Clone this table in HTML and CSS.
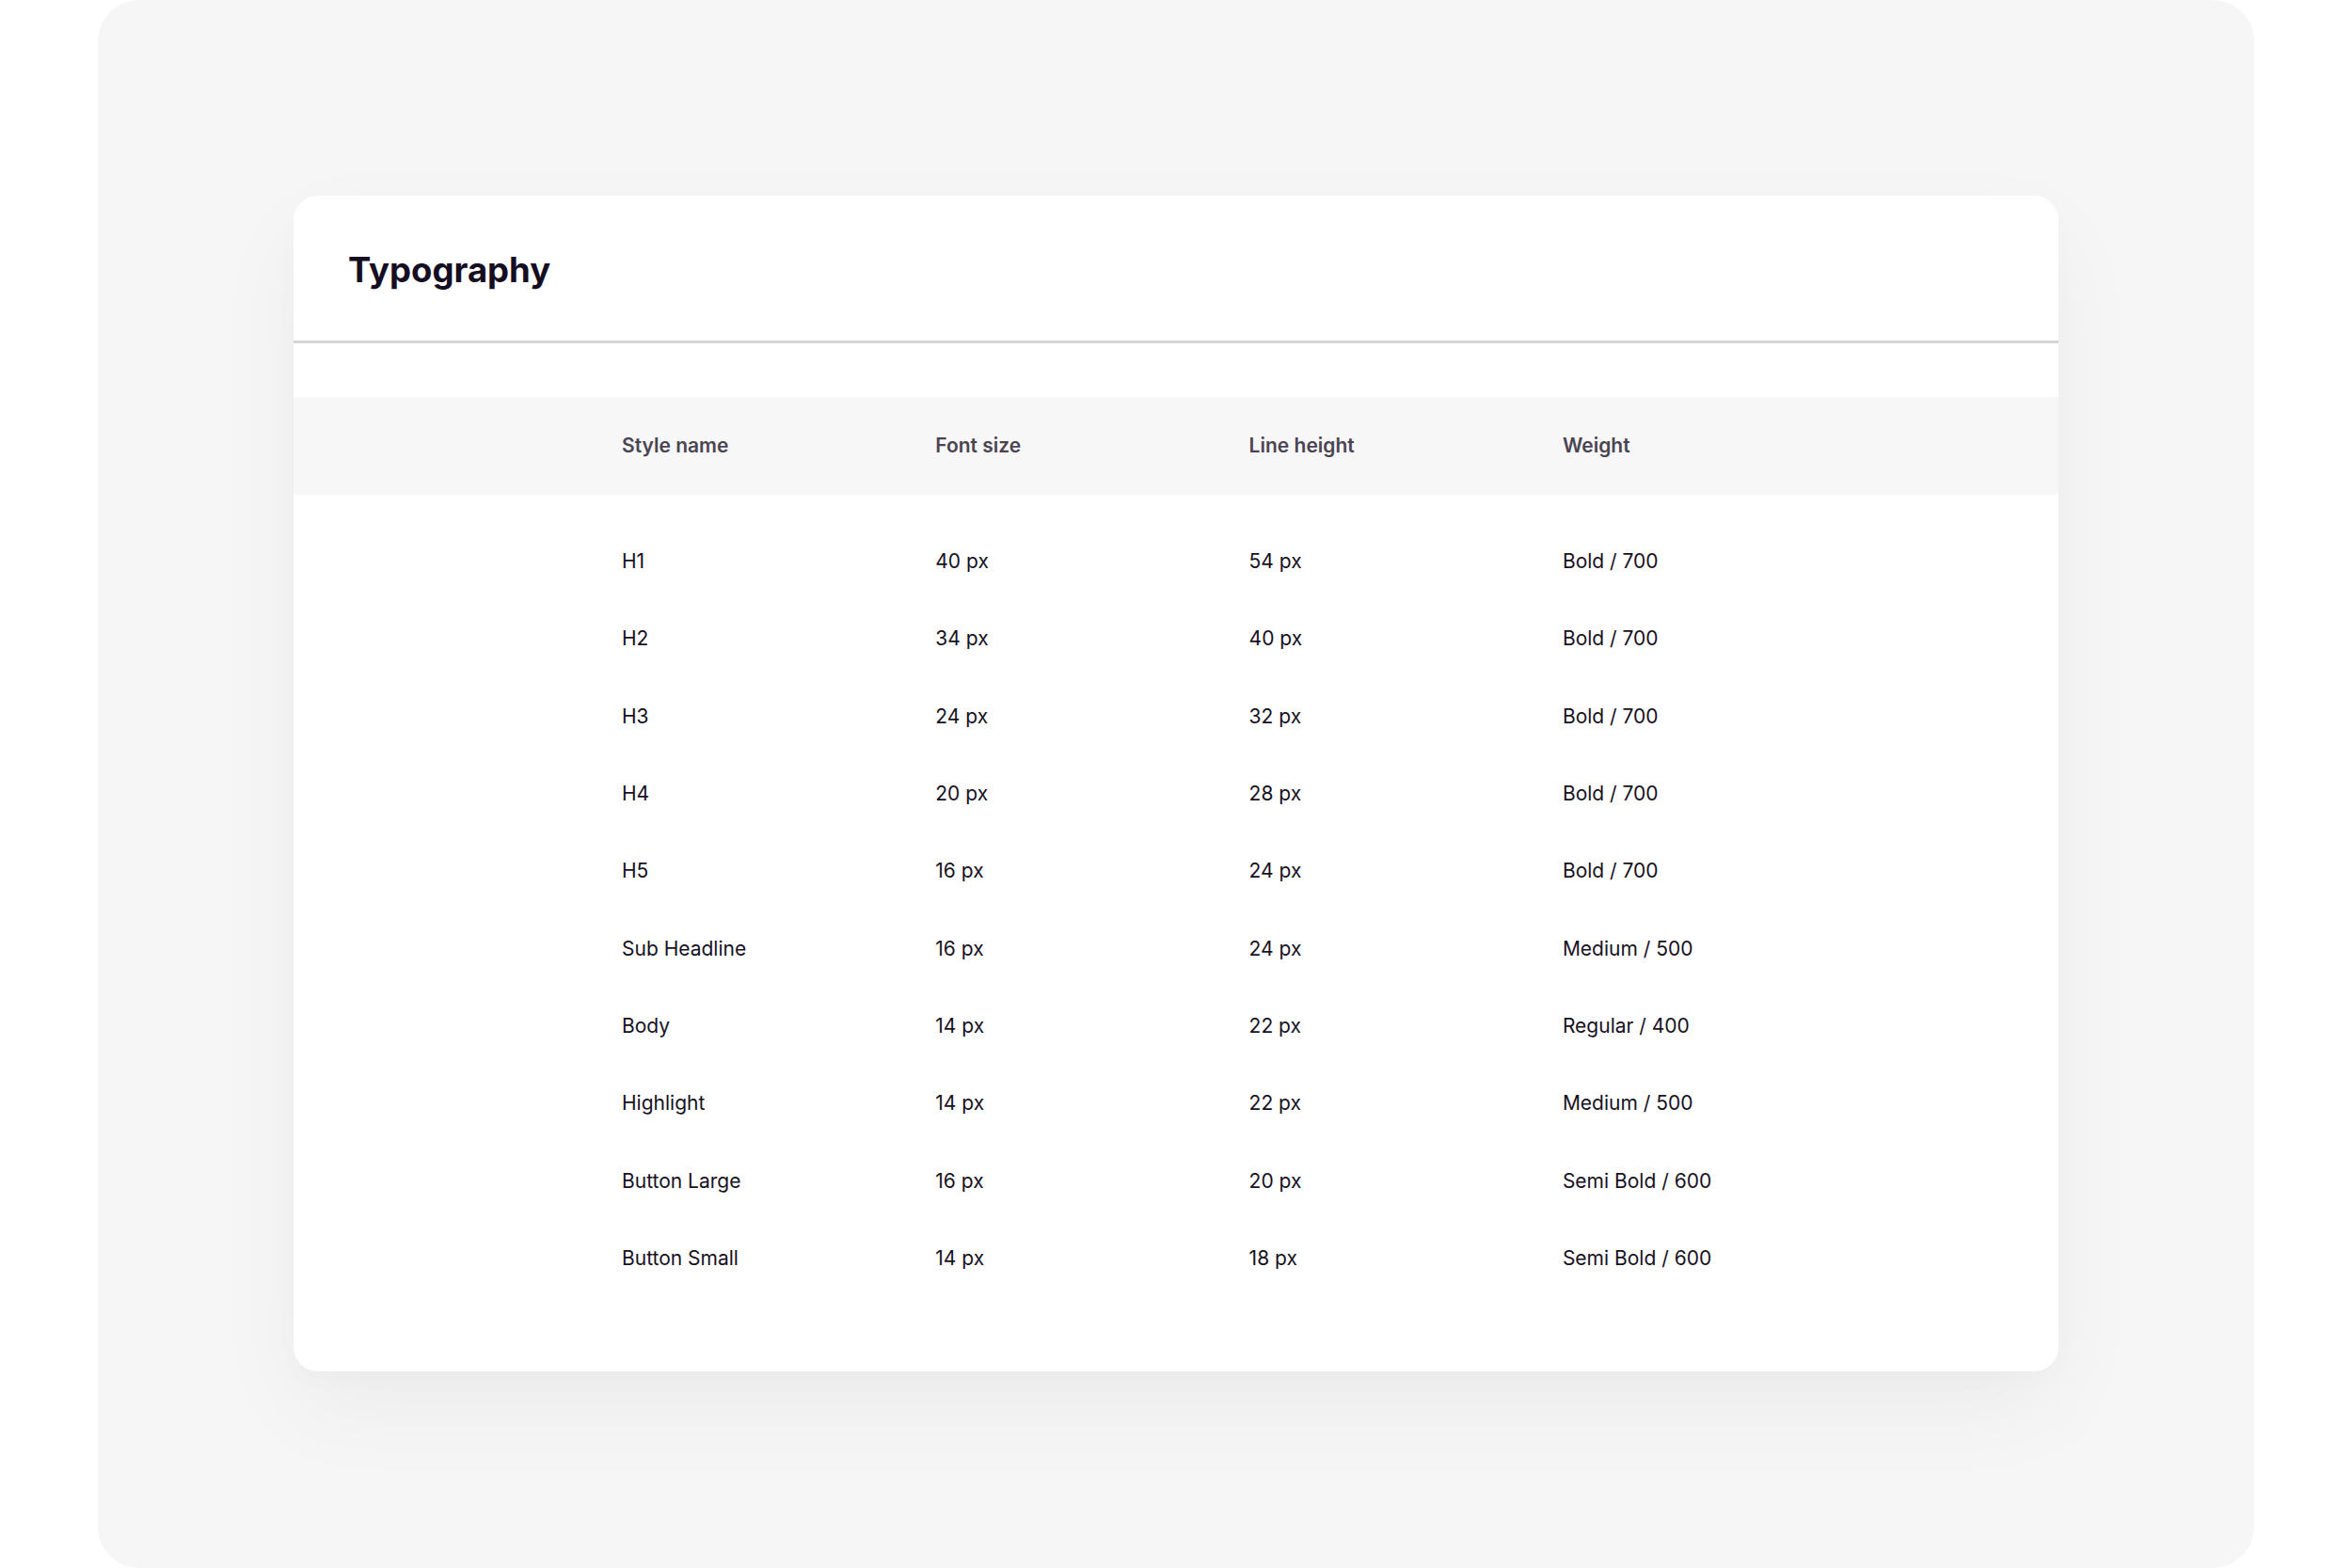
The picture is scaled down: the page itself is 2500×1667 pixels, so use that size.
FILE: index.html
```html
<!DOCTYPE html>
<html lang="en">
<head>
<meta charset="utf-8">
<title>Typography</title>
<link rel="stylesheet" href="styles.css">
</head>
<body>
<div class="panel">
  <section class="card">
    <header class="card-head">
      <h1 class="title">Typography</h1>
    </header>
    <div class="table">
      <div class="row head">
        <div class="cell">Style name</div>
        <div class="cell">Font size</div>
        <div class="cell">Line height</div>
        <div class="cell">Weight</div>
      </div>
      <div class="body">
        <div class="row"><div class="cell">H1</div><div class="cell">40 px</div><div class="cell">54 px</div><div class="cell">Bold / 700</div></div>
        <div class="row"><div class="cell">H2</div><div class="cell">34 px</div><div class="cell">40 px</div><div class="cell">Bold / 700</div></div>
        <div class="row"><div class="cell">H3</div><div class="cell">24 px</div><div class="cell">32 px</div><div class="cell">Bold / 700</div></div>
        <div class="row"><div class="cell">H4</div><div class="cell">20 px</div><div class="cell">28 px</div><div class="cell">Bold / 700</div></div>
        <div class="row"><div class="cell">H5</div><div class="cell">16 px</div><div class="cell">24 px</div><div class="cell">Bold / 700</div></div>
        <div class="row"><div class="cell">Sub Headline</div><div class="cell">16 px</div><div class="cell">24 px</div><div class="cell">Medium / 500</div></div>
        <div class="row"><div class="cell">Body</div><div class="cell">14 px</div><div class="cell">22 px</div><div class="cell">Regular / 400</div></div>
        <div class="row"><div class="cell">Highlight</div><div class="cell">14 px</div><div class="cell">22 px</div><div class="cell">Medium / 500</div></div>
        <div class="row"><div class="cell">Button Large</div><div class="cell">16 px</div><div class="cell">20 px</div><div class="cell">Semi Bold / 600</div></div>
        <div class="row"><div class="cell">Button Small</div><div class="cell">14 px</div><div class="cell">18 px</div><div class="cell">Semi Bold / 600</div></div>
      </div>
    </div>
  </section>
</div>
</body>
</html>
```
FILE: styles.css
```css
* { box-sizing: border-box; }

html, body {
  margin: 0;
  padding: 0;
  background: #ffffff;
}

body {
  font-family: Inter, "Noto Sans", "Liberation Sans", sans-serif;
  color: #17111f;
  width: 2500px;
  height: 1667px;
  overflow: hidden;
}

.panel {
  margin: 0 104px;
  height: 1667px;
  background: #f6f6f6;
  border-radius: 44px;
  padding: 208px;
}

.card {
  background: #ffffff;
  border-radius: 26px;
  height: 1250px;
  box-shadow: 0 40px 100px rgba(0, 0, 0, 0.045), 0 10px 30px rgba(0, 0, 0, 0.015);
  overflow: hidden;
}

.card-head {
  height: 156.5px;
  padding: 61px 58px 0;
  border-bottom: 3px solid #d5d5d7;
}

.title {
  margin: 0;
  font-size: 36.5px;
  line-height: 37px;
  font-weight: 700;
  color: #150d22;
}

.table {
  padding-top: 57.5px;
}

.row {
  display: grid;
  grid-template-columns: 333.3px 333.3px 333.3px 333.3px;
  padding-left: 349px;
  height: 82.3px;
  align-items: center;
  font-size: 21px;
  line-height: 24px;
  font-weight: 400;
}

.row.head {
  height: 104px;
  background: #f7f7f7;
  font-weight: 600;
  color: #4a4452;
}

.body {
  padding-top: 30px;
}
```
